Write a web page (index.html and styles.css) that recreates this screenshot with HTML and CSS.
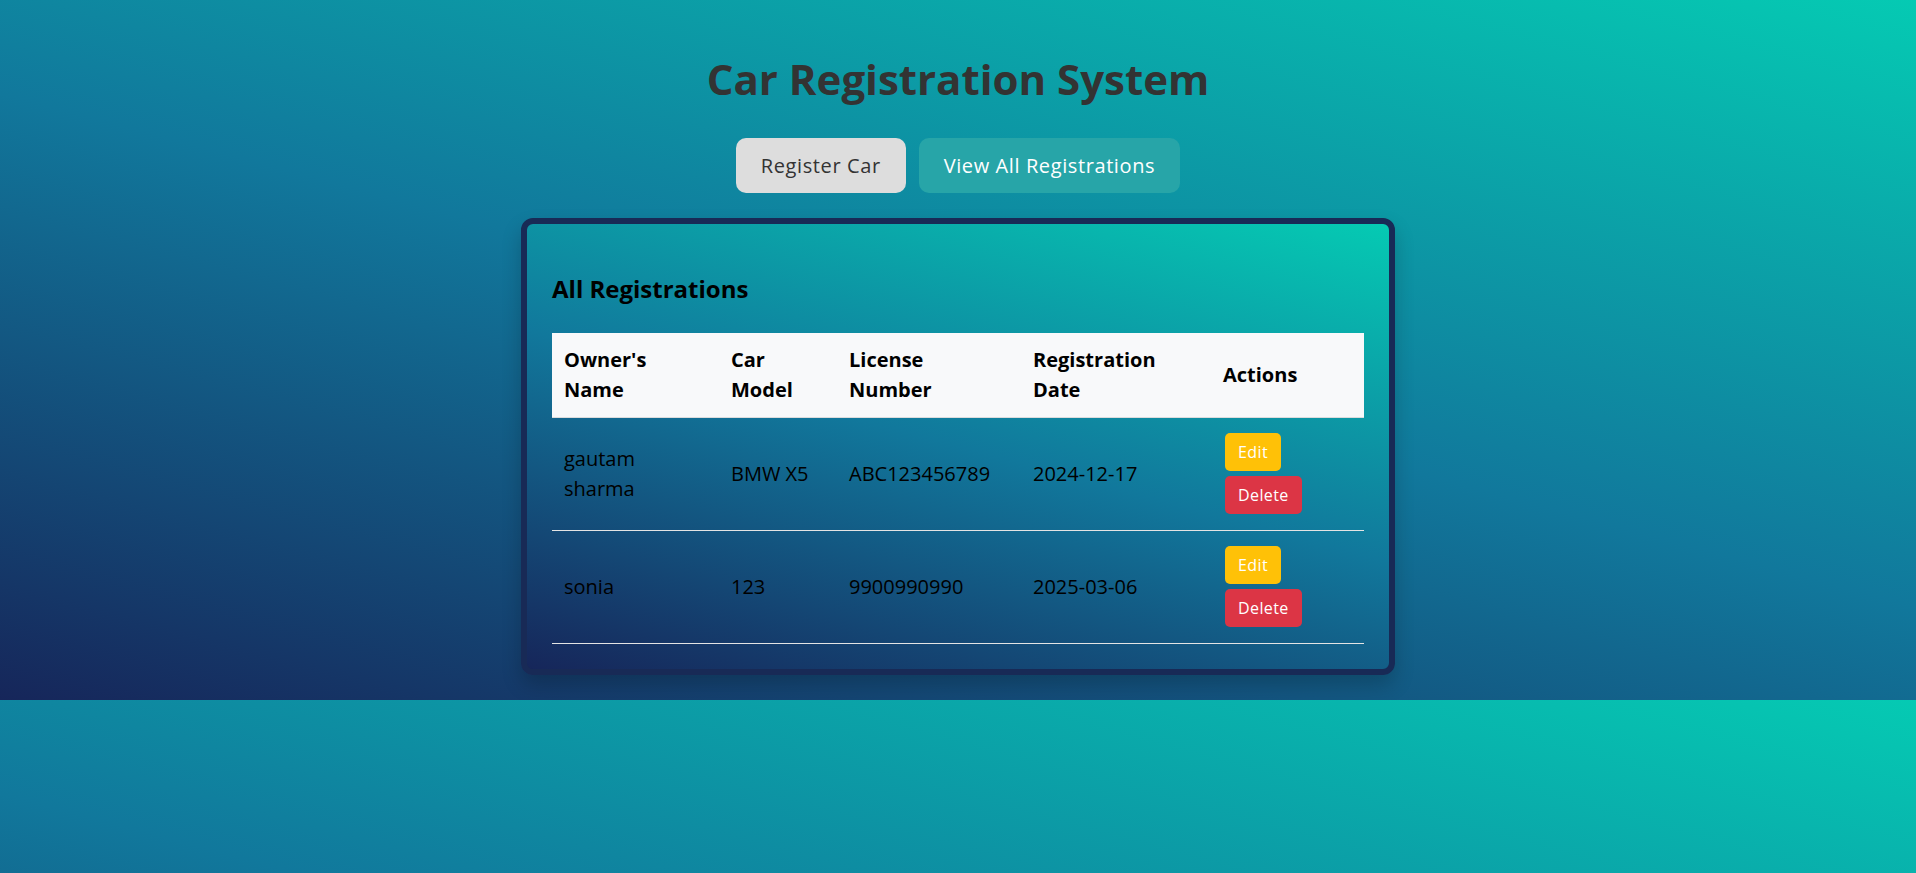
FILE: index.html
```html
<!DOCTYPE html>
<html lang="en">
<head>
<meta charset="UTF-8">
<title>Car Registration System</title>
<link rel="stylesheet" href="styles.css">
</head>
<body>
  <h1 class="title">Car Registration System</h1>
  <nav class="tabs">
    <button class="tab tab-light">Register Car</button>
    <button class="tab tab-teal">View All Registrations</button>
  </nav>
  <section class="card">
    <h2 class="card-title">All Registrations</h2>
    <table class="reg-table">
      <colgroup>
        <col class="c-owner">
        <col class="c-model">
        <col class="c-license">
        <col class="c-date">
        <col class="c-actions">
      </colgroup>
      <thead>
        <tr>
          <th>Owner's Name</th>
          <th>Car Model</th>
          <th>License Number</th>
          <th>Registration Date</th>
          <th>Actions</th>
        </tr>
      </thead>
      <tbody>
        <tr>
          <td>gautam sharma</td>
          <td>BMW X5</td>
          <td>ABC123456789</td>
          <td>2024-12-17</td>
          <td>
            <div class="actions">
              <button class="btn btn-edit">Edit</button>
              <button class="btn btn-delete">Delete</button>
            </div>
          </td>
        </tr>
        <tr>
          <td>sonia</td>
          <td>123</td>
          <td>9900990990</td>
          <td>2025-03-06</td>
          <td>
            <div class="actions">
              <button class="btn btn-edit">Edit</button>
              <button class="btn btn-delete">Delete</button>
            </div>
          </td>
        </tr>
      </tbody>
    </table>
  </section>
</body>
</html>
```
FILE: styles.css
```css
html {
  margin: 0;
}

body {
  margin: 0;
  padding: 20px 0 25px;
  font-family: "Open Sans", "Liberation Sans", sans-serif;
  background: linear-gradient(15deg, #16265a 0%, #11789c 50%, #05cab3 100%);
  color: #000;
}

.title {
  margin: 29px 0;
  font-size: 42px;
  line-height: 60px;
  font-weight: 700;
  color: #333;
  text-align: center;
}

.tabs {
  display: flex;
  justify-content: center;
  gap: 13px;
}

.tab {
  font-family: inherit;
  font-size: 20px;
  line-height: 31px;
  letter-spacing: 0.6px;
  padding: 12px 25px;
  border: none;
  border-radius: 10px;
  cursor: pointer;
}

.tab-light {
  background: #dddddd;
  color: #333;
}

.tab-teal {
  background: #27a5a8;
  color: #fff;
}

.card {
  box-sizing: border-box;
  width: 874px;
  margin: 25px auto 0;
  padding: 25px;
  border: 6px solid #182a56;
  border-radius: 12px;
  background: linear-gradient(15deg, #16265a 0%, #11789c 50%, #05cab3 100%);
  box-shadow: 0 10px 20px rgba(0, 0, 0, 0.2);
}

.card-title {
  margin: 22px 0 26px;
  font-size: 24px;
  line-height: 36px;
  font-weight: 700;
  color: #000;
}

.reg-table {
  width: 100%;
  table-layout: fixed;
  border-collapse: collapse;
  font-size: 20px;
  line-height: 30px;
}

.c-owner { width: 167px; }
.c-model { width: 118px; }
.c-license { width: 184px; }
.c-date { width: 190px; }
.c-actions { width: 153px; }

.reg-table th,
.reg-table td {
  padding: 12px;
  text-align: left;
  vertical-align: middle;
}

.reg-table th {
  background: #f8f9fa;
  font-weight: 700;
  color: #000;
  border-bottom: 1px solid #dcdcdc;
}

.reg-table td {
  font-weight: 400;
  color: #000;
  border-bottom: 1px solid #e4e4e4;
}

.reg-table th:nth-child(1),
.reg-table td:nth-child(1) {
  padding-right: 24px;
}

.reg-table th:nth-child(2),
.reg-table td:nth-child(2) {
  padding-right: 20px;
}

.reg-table th:nth-child(3),
.reg-table td:nth-child(3) {
  padding-right: 22px;
}

.reg-table th:nth-child(4),
.reg-table td:nth-child(4) {
  padding-right: 20px;
}

.actions {
  display: flex;
  flex-direction: column;
  align-items: flex-start;
  gap: 5px;
  padding: 3px 0 4px 2px;
}

.btn {
  font-family: inherit;
  font-size: 16px;
  line-height: 24px;
  letter-spacing: 0.4px;
  padding: 7px 13px;
  border: none;
  border-radius: 5px;
  color: #fff;
  cursor: pointer;
}

.btn-edit {
  background: #ffc107;
}

.btn-delete {
  background: #dc3545;
}
```
